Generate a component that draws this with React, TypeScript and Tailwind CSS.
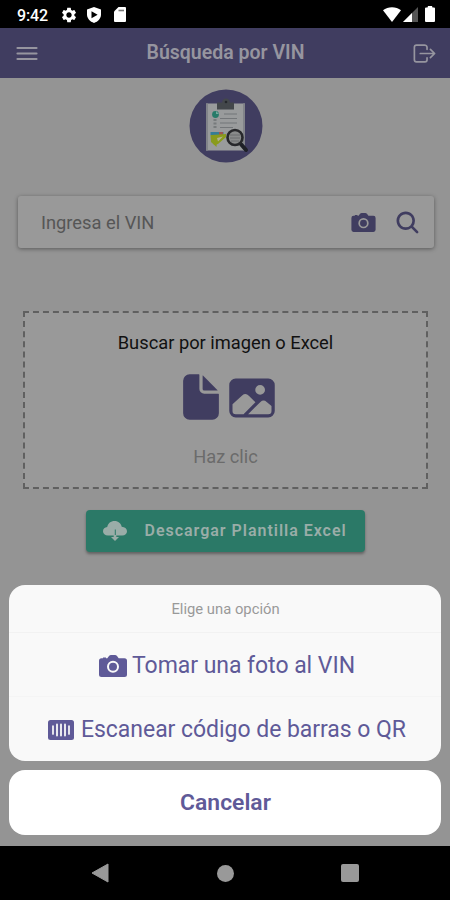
import type { ReactNode } from 'react';
import { IoDocument, IoImage, IoLogOutOutline, IoSearch } from 'react-icons/io5';
import { MdSettings } from 'react-icons/md';

function CameraIcon({ className, ring }: { className: string; ring: string }) {
  return (
    <svg viewBox="0 0 28 22" className={className}>
      <path
        d="M2.500 3.300H4V2.400h3v.9h1.300L10 1q.8-1 2-1h4q1.200 0 2 1l1.700 2.300h5.800q2.500 0 2.500 2.500v13.700q0 2.500-2.500 2.500h-23Q0 22 0 19.500V5.800q0-2.500 2.500-2.500Z"
        fill="currentColor"
      />
      <circle cx="14" cy="11.800" r="5" fill="none" stroke={ring} strokeWidth="2" />
    </svg>
  );
}

function BarcodeIcon() {
  return (
    <svg viewBox="0 0 26 20" className="h-[20px] w-[26px]">
      <rect width="26" height="20" rx="2.500" fill="currentColor" />
      <path d="M5 6v8M21 6v8" stroke="#f9f9f9" strokeWidth="1.700" strokeLinecap="round" />
      <path d="M9 4.500v11M13 4.500v11M17 4.500v11" stroke="#f9f9f9" strokeWidth="1.800" strokeLinecap="round" />
    </svg>
  );
}

function CloudIcon() {
  return (
    <svg viewBox="0 0 24 20" className="h-[20px] w-[24px]">
      <path
        d="M5 14.500C2 14.500 0 12.700 0 10.200 0 7.800 1.800 6.300 4.200 6 5 2.300 7.800 0 11.500 0c4 0 6.500 2.500 7.200 5.700 3 .2 5.300 1.700 5.300 4.500 0 2.600-2 4.300-4.700 4.300h-6.500V8.500h-1v6Z"
        fill="currentColor"
      />
      <path d="M10.700 14h2.600v2h2.700L12 20l-4-4h2.700Z" fill="currentColor" />
    </svg>
  );
}

const options = [
  {
    label: 'Tomar una foto al VIN',
    icon: <CameraIcon className="h-[22px] w-[28px]" ring="#f9f9f9" />,
    gap: 'gap-[5px] pt-[3px]'
  },
  { label: 'Escanear código de barras o QR', icon: <BarcodeIcon />, gap: 'gap-[7px] pt-px' }
];

function StatusBar() {
  return (
    <div className="flex h-[28px] shrink-0 items-center bg-black pl-[17px] pr-[15px] text-white">
      <span className="w-[43px] pt-[3px] text-[16px] font-medium leading-[28px] tracking-[-0.1px]">9:42</span>
      <MdSettings className="mt-px h-[18px] w-[18px]" />
      <svg viewBox="0 0 14 16" className="ml-[9px] mt-px h-[16px] w-[14px]">
        <path d="M7 0 14 2.600v5c0 4-3 7.200-7 8.400C3 14.800 0 11.600 0 7.600v-5Z" fill="currentColor" />
        <path d="M4.500 4.300v7L10.600 7.800Z" fill="#000" />
      </svg>
      <svg viewBox="0 0 12 15" className="ml-[13px] h-[15px] w-[12px]">
        <path d="M4.500 0H11q1 0 1 1v13q0 1-1 1H1q-1 0-1-1V4.500Z" fill="currentColor" />
        <path d="M4.500 3.500h5.500" stroke="#777" strokeWidth="1.600" />
      </svg>
      <div className="ml-auto flex items-center">
        <svg viewBox="0 0 18 15" className="h-[15px] w-[18px]">
          <path d="M9 15 0 3.300C5-.9 13-.9 18 3.300Z" fill="currentColor" />
        </svg>
        <svg viewBox="0 0 15 15" className="ml-[2px] h-[15px] w-[15px]">
          <path d="M15 0v15H0Z" fill="#555" />
          <path d="M9 6v9H0Z" fill="currentColor" />
        </svg>
        <svg viewBox="0 0 10 16" className="ml-[7px] h-[16px] w-[10px]">
          <path d="M3 0h4l.5 1.500H9q1 0 1 1V15q0 1-1 1H1q-1 0-1-1V2.500q0-1 1-1h1.500Z" fill="currentColor" />
        </svg>
      </div>
    </div>
  );
}

function Header() {
  return (
    <header className="flex h-[50px] shrink-0 items-center justify-between bg-[#403d60] pl-[16px] pr-[12px] text-[#96959f]">
      <svg viewBox="0 0 22 16" className="h-[16px] w-[22px]" stroke="currentColor" strokeWidth="2.200">
        <path d="M1.500 3h19M1.500 8.500h19M1.500 14h19" strokeLinecap="round" />
      </svg>
      <h1 className="ml-[2px] text-[19.5px] font-semibold leading-[48px]">Búsqueda por VIN</h1>
      <IoLogOutOutline className="h-[27px] w-[27px]" />
    </header>
  );
}

function ReportLogo() {
  return (
    <svg viewBox="0 0 74 74" className="ml-[2px] h-[74px] w-[74px]">
      <circle cx="37" cy="37" r="36.500" fill="#403d60" />
      <path d="M17 14.500h39v47H17Z" fill="#999b9c" />
      <path d="M17 14.500h2v47h-2ZM54 14.500h2v47h-2Z" fill="#818389" />
      <path d="M28 13.500h5q.5-4 4-4t4 4h4v7H28Z" fill="#43474b" />
      <circle cx="37" cy="13" r="1.300" fill="#24272b" />
      <circle cx="26.500" cy="25.500" r="3.400" fill="#267b69" />
      <path d="M27 25v-3l3 3Z" fill="#75a89d" />
      <path d="M35 25h13M31 29.500h17M31 34h17M31 38.500h13" stroke="#737679" strokeWidth="1.200" />
      <path d="M26 30v9" stroke="#777b7c" strokeWidth="3" strokeDasharray="2 1.500" />
      <path d="M21.500 43h13v3h-13Z" fill="#367d96" />
      <path d="M30 43h4v3h-4Z" fill="#9d5551" />
      <path d="M21.500 46h7l-1 12-5.500-5Z" fill="#879a22" />
      <path d="m23 46 14-1v3l-8 7-4 1Z" fill="#8a9b1b" />
      <path d="m28 49 6-1.500-5 5Z" fill="#b2b193" />
      <path d="m51 54 6 7" stroke="#1e2027" strokeWidth="4" strokeLinecap="round" />
      <circle cx="46" cy="48.500" r="7.500" fill="#898b8b" stroke="#27282b" strokeWidth="2.600" />
      <path d="M41 46h10M41 49h10M42 52h8" stroke="#6b6d6f" strokeWidth="1" />
    </svg>
  );
}

function Panel({ children, className }: { children: ReactNode; className: string }) {
  return <div className={`rounded-[16px] text-[#5f5a98] ${className}`}>{children}</div>;
}

function ActionSheet() {
  return (
    <div className="absolute inset-x-[9px] top-[585px]">
      <Panel className="h-[176px] bg-[#f9f9f9]">
        <p className="h-[48px] border-b border-[#f2f2f2] pl-px text-center text-[14.8px] leading-[48px] text-[#999]">
          Elige una opción
        </p>
        {options.map((option) => (
          <button
            key={option.label}
            className={`flex h-[64px] w-full items-center justify-center border-[#f5f5f5] pl-[4px] text-[23px] tracking-[-0.04px] first-of-type:border-b ${option.gap}`}
          >
            {option.icon}
            <span className="pt-px">{option.label}</span>
          </button>
        ))}
      </Panel>
      <Panel className="mt-[9px] h-[65px] bg-white">
        <button className="h-full w-full pl-px pt-[2px] text-[22.9px] font-semibold">Cancelar</button>
      </Panel>
    </div>
  );
}

function NavBar() {
  return (
    <nav className="flex h-[54px] shrink-0 items-center justify-between bg-black px-[91px] text-[#999]">
      <svg viewBox="0 0 18 20" className="h-[20px] w-[18px]">
        <path d="M17 1v18L1 10Z" fill="currentColor" stroke="currentColor" strokeLinejoin="round" />
      </svg>
      <span className="h-[17px] w-[17px] rounded-full bg-[#999]" />
      <span className="h-[18px] w-[18px] rounded-[2px] bg-[#999]" />
    </nav>
  );
}

export default function App() {
  return (
    <div className="relative flex h-[900px] w-[450px] flex-col overflow-hidden bg-[#949494] font-[Roboto,sans-serif]">
      <StatusBar />
      <Header />
      <main className="flex flex-1 flex-col items-center pt-[11px]">
        <ReportLogo />
        <div className="ml-[2px] mt-[33px] flex h-[52px] w-[416px] items-center rounded-[3px] bg-[#999] pl-[23px] pr-[13px] text-[#403d60] shadow-[0_1px_4px_rgba(0,0,0,0.4)]">
          <span className="flex-1 pt-px text-[18.3px] text-[#565656]">Ingresa el VIN</span>
          <CameraIcon className="h-[19px] w-[25px]" ring="#999" />
          <IoSearch className="ml-[18px] h-[27px] w-[27px]" />
        </div>
        <section className="mt-[63px] flex h-[178px] w-[405px] flex-col items-center border-2 border-dashed border-[#606060] bg-[#999]">
          <p className="ml-px mt-[16px] text-[18.3px] leading-[28px] text-[#111]">Buscar por imagen o Excel</p>
          <div className="ml-[2px] mt-[12px] flex h-[56px] items-center text-[#403d60]">
            <IoDocument className="h-[52px] w-[52px]" />
            <IoImage className="-ml-px mt-[2px] h-[52px] w-[52px]" />
          </div>
          <p className="ml-px mt-[18px] text-[18.3px] leading-[28px] text-[#6b6b6b]">Haz clic</p>
        </section>
        <button className="mt-[21px] flex h-[42px] w-[279px] items-center rounded-[4px] bg-[#2b7967] pl-[17px] text-[#9aada8] shadow-[0_2px_3px_rgba(0,0,0,0.35)]">
          <CloudIcon />
          <span className="ml-[18px] text-[16px] font-semibold tracking-[0.98px]">Descargar Plantilla Excel</span>
        </button>
      </main>
      <NavBar />
      <ActionSheet />
    </div>
  );
}
